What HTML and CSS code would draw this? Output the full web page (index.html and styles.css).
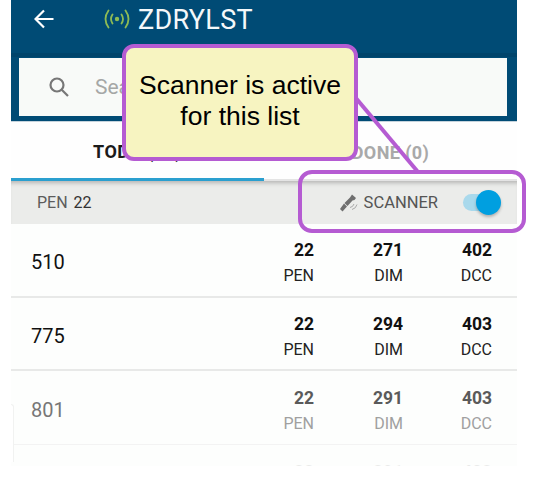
FILE: index.html
```html
<!DOCTYPE html>
<html lang="en">
<head>
<meta charset="utf-8">
<title>ZDRYLST</title>
<link rel="stylesheet" href="styles.css">
</head>
<body>
<div class="app">
  <header class="topbar">
    <svg class="back" width="20" height="20" viewBox="0 0 20 20" fill="none" stroke="#fff" stroke-width="2.200"><path d="M19.500 10H2M10 1.500 1.500 10l8.500 8.500"/></svg>
    <svg class="signal" width="28" height="22" viewBox="0 0 28 22" fill="none" stroke="#8dbb55" stroke-width="1.800" stroke-linecap="round"><circle cx="14" cy="11" r="2.200" fill="#8dbb55" stroke="none"/><path d="M9.500 6.500q-3 4.500 0 9M18.500 6.500q3 4.500 0 9M5.500 2.500q-6 8.500 0 17M22.500 2.500q6 8.500 0 17"/></svg>
    <h1 class="title">ZDRYLST</h1>
  </header>
  <div class="searchwrap">
    <div class="search">
      <svg width="22" height="22" viewBox="0 0 22 22" fill="none" stroke="#777" stroke-width="2.200"><circle cx="9" cy="9" r="6.500"/><path d="m13.700 13.700 6.300 6.300"/></svg>
      <span class="placeholder">Search</span>
    </div>
  </div>
  <nav class="tabs">
    <div class="tab active">TODO (22)</div>
    <div class="tab">DONE (0)</div>
  </nav>
  <div class="filter">
    <div class="pen"><span class="pen-label">PEN</span> 22</div>
    <div class="scanner">
      <svg width="20" height="20" viewBox="0 0 20 20"><path d="M13 1.500 17 5l-1.500 2-2 .5L8.500 13l-3-3L11 4.500z" fill="#6f6f6f"/><path d="M5 10.500 8 13.500 3.500 18.500 1 16z" fill="#6f6f6f"/><path d="M11 14.500q3-.5 4-3.500M13 16.500q4-1 5-5" fill="none" stroke="#a8a8a8" stroke-width="1"/></svg>
      <span class="scanner-label">SCANNER</span>
      <div class="switch"><div class="knob"></div></div>
    </div>
  </div>
  <div class="row">
    <div class="name">510</div>
    <div class="cell"><b>22</b><span>PEN</span></div>
    <div class="cell"><b>271</b><span>DIM</span></div>
    <div class="cell"><b>402</b><span>DCC</span></div>
  </div>
  <div class="row">
    <div class="name">775</div>
    <div class="cell"><b>22</b><span>PEN</span></div>
    <div class="cell"><b>294</b><span>DIM</span></div>
    <div class="cell"><b>403</b><span>DCC</span></div>
  </div>
  <div class="row dim">
    <div class="name">801</div>
    <div class="cell"><b>22</b><span>PEN</span></div>
    <div class="cell"><b>291</b><span>DIM</span></div>
    <div class="cell"><b>403</b><span>DCC</span></div>
  </div>
  <div class="row faint">
    <div class="name">&nbsp;</div>
    <div class="cell"><b>22</b><span>PEN</span></div>
    <div class="cell"><b>291</b><span>DIM</span></div>
    <div class="cell"><b>403</b><span>DCC</span></div>
  </div>
</div>
<div class="edge"></div>
<svg class="leader" width="538" height="479" viewBox="0 0 538 479"><path d="M355 97 418 172" stroke="#b55bd2" stroke-width="4" fill="none"/></svg>
<div class="callout">Scanner is active<br>for this list</div>
<div class="highlight"></div>
</body>
</html>
```
FILE: styles.css
```css
* { box-sizing: border-box; }
html, body { margin: 0; height: 100%; background: #fff; overflow: hidden; }
body { font-family: Roboto, "Liberation Sans", sans-serif; position: relative; }
.app { margin-left: 11px; width: 506px; height: 466px; overflow: hidden; background: #fdfefd; }

.topbar { height: 53px; background: #004b75; display: flex; align-items: center; padding: 0 0 13px 23px; }
.back { flex: none; margin-bottom: 3px; }
.signal { flex: none; margin: 0 0 3px 49px; }
.title { margin: 0 0 0 7px; font-size: 27px; font-weight: 400; color: #f4f8fa; line-height: 1; letter-spacing: .3px; }

.searchwrap { height: 69px; background: #004b75; border-top: 4px solid #00446b; padding: 1px 10px 5px 8px; border-bottom: 1px solid #c5d3dc; }
.search { height: 58px; background: #f8faf8; display: flex; align-items: center; gap: 25px; padding-left: 29px; }
.placeholder { font-size: 21px; color: #a5a7a6; }

.tabs { height: 59px; display: flex; background: #fefefe; }
.tab { width: 50%; display: flex; align-items: center; justify-content: center; font-size: 18px; font-weight: 700; letter-spacing: .4px; color: #a9a9a9; padding-top: 3px; border-bottom: 2px solid #e4e4e4; }
.tab.active { color: #1b1b1b; border-bottom: 3px solid #2a9fcf; }

.filter { height: 43px; background: #ebecea; display: flex; justify-content: space-between; align-items: center; padding: 0 20px 0 26px; box-shadow: inset 0 5px 4px -3px #b5b5b3; }
.pen { font-size: 16px; color: #333; word-spacing: 2px; }
.pen-label { color: #5c5c5c; }
.scanner { display: flex; align-items: center; }
.scanner-label { font-size: 16.500px; color: #555; margin-left: 5px; }
.switch { width: 34px; height: 17px; border-radius: 9px; background: #a9d9ec; margin-left: 25px; position: relative; }
.knob { position: absolute; right: -4px; top: -4px; width: 25px; height: 25px; border-radius: 50%; background: #009fe0; box-shadow: 0 2px 3px rgba(0, 0, 0, .25); }

.row { height: 73.500px; display: flex; align-items: center; padding: 0 25px 0 20px; border-bottom: 2px solid #e8e9e8; color: #111; }
.name { flex: 1; font-size: 20px; padding-top: 5px; }
.cell { width: 89px; display: flex; flex-direction: column; align-items: flex-end; font-size: 16px; line-height: 25px; padding-top: 7px; }
.cell b { font-size: 17.500px; font-weight: 700; }
.cell span { color: #222; }
.row.dim { border-bottom: 1px solid #f3f3f3; }
.row.dim .name { color: #777; }
.row.dim b { color: #5a5a5a; }
.row.dim span { color: #a0a0a0; }
.row.faint { border-bottom: 0; opacity: .08; }

.edge { position: absolute; left: 11px; top: 404px; width: 3px; height: 58px; border: solid #f1f2f1; border-width: 1px 1px 0 0; border-top-right-radius: 4px; background: #fff; }
.leader { position: absolute; left: 0; top: 0; pointer-events: none; }
.callout { position: absolute; left: 122px; top: 44px; width: 236px; height: 117px; background: #f7f4c1; border: 4px solid #b55bd2; border-radius: 12px; font-family: "Liberation Sans", Arial, sans-serif; font-size: 26.500px; line-height: 31px; color: #000; text-align: center; padding-top: 22px; }
.highlight { position: absolute; left: 298px; top: 170px; width: 228px; height: 63px; border: 4px solid #b55bd2; border-radius: 14px; }
```
